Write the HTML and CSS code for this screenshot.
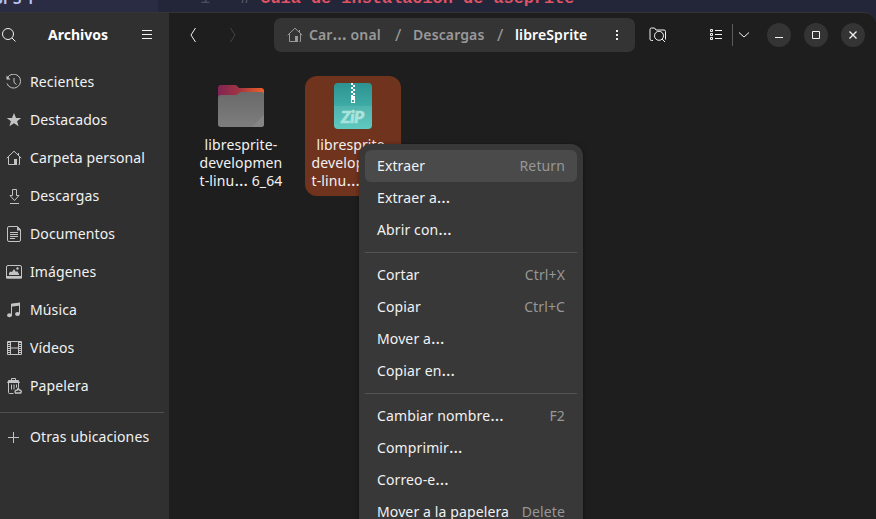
FILE: index.html
```html
<!DOCTYPE html>
<html lang="es">
<head>
<meta charset="utf-8">
<title>Archivos</title>
<link rel="stylesheet" href="styles.css">
</head>
<body>
<div class="editor">
  <div class="editor-side"><span>SPS 1</span></div>
  <div class="editor-code"><span class="line-no">1</span><span class="hash">#</span><span class="heading">Guia de instalacion de aseprite</span></div>
</div>
<div class="window">
  <aside class="sidebar">
    <header class="side-head">
      <svg class="search" width="16" height="16" viewBox="0 0 16 16"><circle cx="7" cy="7" r="5.5"/><path d="M11 11l3.5 3.5"/></svg>
      <h1>Archivos</h1>
      <svg class="burger" width="12" height="12" viewBox="0 0 12 12"><path d="M1 1.5h10M1 5.5h10M1 9.5h10"/></svg>
    </header>
    <nav>
      <a><svg viewBox="0 0 16 16"><path d="M1.200 4.200A7 7 0 1 1 1 9.500M8 4v4.500l2.500 2"/><path class="solid" d="M.5 1.500v4h4z"/></svg><span>Recientes</span></a>
      <a><svg viewBox="0 0 16 16"><path class="solid" d="M8 1l2 5h5.200l-4.100 3.200 1.500 5L8 11.200l-4.600 3 1.500-5L.8 6H6z"/></svg><span>Destacados</span></a>
      <a><svg viewBox="0 0 16 16"><path d="M.7 8.200L8 1.200l7.300 7M2.500 7v7.500h6M12.500 3v2M13.500 7v7.500h-1"/><path class="solid" d="M8 9h3v6H8z"/></svg><span>Carpeta personal</span></a>
      <a><svg viewBox="0 0 16 16"><path d="M6.500 1.500h4v6H13l-4.500 5L4 7.500h2.500zM4 15.500h9"/></svg><span>Descargas</span></a>
      <a><svg viewBox="0 0 16 16"><path d="M3 .5h8.500l3 3V14q0 1.500-1.500 1.500H3q-1.500 0-1.500-1.500V2Q1.500.5 3 .5zM4 6.500h8M4 8.500h8M4 10.500h8M4 12.500h5"/><path class="solid" d="M11 .5l4 4h-4z"/></svg><span>Documentos</span></a>
      <a><svg viewBox="0 0 16 16"><rect x=".5" y="1.500" width="15" height="12.500" rx="1.500"/><path class="solid" d="M0 12h16v2.500H0zM3 11V9l1.500-1.500L6 8l2-3 2 3 1-1 2 3v1z"/><circle class="solid" cx="11.500" cy="4.500" r="1.200"/></svg><span>Imágenes</span></a>
      <a><svg viewBox="0 0 16 16"><path d="M5.500 13V2.500l8-1V12"/><path class="solid" d="M5 1.800l9-1.300v3L5 4.800z"/><ellipse class="solid" cx="3.500" cy="13.300" rx="2.400" ry="2"/><ellipse class="solid" cx="11.500" cy="12" rx="2.400" ry="2"/></svg><span>Música</span></a>
      <a><svg viewBox="0 0 16 16"><path d="M1.500 1.500h14v13h-14zM4.500 1.500v13M12.500 1.500v13M4.500 8h8"/><path class="film" d="M3 2v12M14 2v12"/></svg><span>Vídeos</span></a>
      <a><svg viewBox="0 0 16 16"><path d="M2.500 5v9.500q0 1 1 1h4M5.500 2V.5h4V2M5.500 6.500v5M8 6.500v5M10.500 6.500v3M12.500 5v4"/><path stroke-width="1.400" d="M9.500 15q-1.500-2.500 1.800-3l1-2 1 2q3 .5 1.500 3z"/><path class="solid" d="M1 5l1.500-3h10L14 5z"/></svg><span>Papelera</span></a>
      <hr>
      <a><svg viewBox="0 0 16 16"><path d="M2 8.500h11M7.500 3v11"/></svg><span>Otras ubicaciones</span></a>
    </nav>
  </aside>
  <main>
    <header class="toolbar">
      <svg class="back" width="8" height="16" viewBox="0 0 8 16"><path d="M6.500 1L2 8l4.500 7"/></svg>
      <svg class="forward" width="8" height="16" viewBox="0 0 8 16"><path d="M1.500 1L6 8l-4.500 7"/></svg>
      <div class="path">
        <svg class="home" width="16" height="16" viewBox="0 0 16 16"><path d="M.7 8.200L8 1.200l7.300 7M2.500 7v7.500h6M12.500 3v2M13.500 7v7.500h-1"/><path class="solid" d="M8 9h3v6H8z"/></svg>
        <span class="crumb c1">Car<span class="more">…</span> onal</span><i>/</i><span class="crumb c2">Descargas</span><i>/</i><span class="crumb current">libreSprite</span>
        <svg class="dots" width="4" height="12" viewBox="0 0 4 12"><path class="solid" d="M1 1h2v2H1zM1 5h2v2H1zM1 9h2v2H1z"/></svg>
      </div>
      <svg class="find" width="18" height="16" viewBox="0 0 18 16"><path d="M4 13.500H2.500q-1.500 0-1.500-1.500V2.500Q1 1 2.500 1h3L7 3h8q1.500 0 1.500 1.500v8"/><circle cx="10" cy="8.800" r="4.500"/><path d="M13 12l3 3"/></svg>
      <svg class="list" width="12" height="12" viewBox="0 0 12 12"><path d="M.5.5h2v2h-2zM.5 4.500h2v2h-2zM.5 8.500h2v2h-2zM5 1.500h7M5 5.500h7M5 9.500h7"/></svg>
      <span class="rule"></span>
      <svg class="down" width="12" height="8" viewBox="0 0 12 8"><path d="M1 1.500l5 4.500 5-4.500"/></svg>
      <span class="win"><svg width="10" height="10" viewBox="0 0 10 10"><path d="M1 7.500h8"/></svg></span>
      <span class="win"><svg width="10" height="10" viewBox="0 0 10 10"><path d="M1.500 1.500h7v7h-7z"/></svg></span>
      <span class="win"><svg width="10" height="10" viewBox="0 0 10 10"><path stroke-width="1.300" d="M1.500 1.500l7 7M8.500 1.500l-7 7"/></svg></span>
    </header>
    <section class="files">
      <figure class="file">
        <svg width="48" height="48" viewBox="0 0 48 48">
          <defs>
            <linearGradient id="fb" x1="0" x2="1"><stop offset="0" stop-color="#802454"/><stop offset=".45" stop-color="#a03442"/><stop offset="1" stop-color="#ee6126"/></linearGradient>
            <linearGradient id="ff" x1="0" y1="0" x2="0" y2="1"><stop offset="0" stop-color="#696969"/><stop offset="1" stop-color="#7e7e7e"/></linearGradient>
          </defs>
          <path fill="url(#fb)" d="M4 3h14q2 0 3 2l1 1h22q3 0 3 3v20H1V6q0-3 3-3z"/>
          <path fill="url(#ff)" d="M4 13h14q2 0 3.500-1.500T25 10h19q3 0 3 3v29q0 3-3 3H4q-3 0-3-3V16q0-3 3-3z"/>
          <path fill="#858585" d="M47 33v9q0 3-3 3h-9z"/>
        </svg>
        <figcaption>libresprite-<br>developmen<br>t-linu<span class="more">…</span> 6_64</figcaption>
      </figure>
      <figure class="file selected">
        <svg width="48" height="48" viewBox="0 0 48 48">
          <defs><linearGradient id="zg" x1="0" y1="0" x2="0" y2="1"><stop offset="0" stop-color="#2d9291"/><stop offset="1" stop-color="#50c5ba"/></linearGradient></defs>
          <rect x="5" y="1" width="38" height="46" rx="4" fill="url(#zg)"/>
          <path fill="#fff" fill-opacity=".09" d="M5 24h38v19q0 4-4 4H9q-4 0-4-4z"/>
          <path stroke="#fff" stroke-width="2" stroke-dasharray="2" d="M23 1v14"/>
          <path stroke="#fff" stroke-width="2" stroke-dasharray="2" stroke-dashoffset="2" d="M25 1v14"/>
          <path fill="#fff" fill-rule="evenodd" d="M22 14h4v7h-4zM23 18v2h2v-2z"/>
          <text class="zip" x="12" y="41" textLength="23">ZiP</text>
        </svg>
        <figcaption>libresprite-<br>developmen<br>t-linu<span class="more">…</span> 6_64</figcaption>
      </figure>
    </section>
  </main>
  <div class="menu">
    <div class="item active"><span>Extraer</span><kbd>Return</kbd></div>
    <div class="item"><span>Extraer a<span class="more">…</span></span></div>
    <div class="item"><span>Abrir con<span class="more">…</span></span></div>
    <hr>
    <div class="item"><span>Cortar</span><kbd>Ctrl+X</kbd></div>
    <div class="item"><span>Copiar</span><kbd>Ctrl+C</kbd></div>
    <div class="item"><span>Mover a<span class="more">…</span></span></div>
    <div class="item"><span>Copiar en<span class="more">…</span></span></div>
    <hr>
    <div class="item"><span>Cambiar nombre<span class="more">…</span></span><kbd>F2</kbd></div>
    <div class="item"><span>Comprimir<span class="more">…</span></span></div>
    <div class="item"><span>Correo-e<span class="more">…</span></span></div>
    <div class="item"><span>Mover a la papelera</span><kbd>Delete</kbd></div>
  </div>
</div>
</body>
</html>
```
FILE: styles.css
```css
* { box-sizing: border-box; }
body {
  margin: 0;
  width: 876px;
  height: 519px;
  overflow: hidden;
  background: #232539;
  color: #f2f2f2;
  font: 14px/18px "Noto Sans", "Open Sans", sans-serif;
  letter-spacing: .12px;
  display: flex;
  flex-direction: column;
}
svg { flex: none; fill: none; stroke: currentColor; display: block; }
svg .solid { fill: currentColor; stroke: none; }
figure svg { stroke: none; }
.more { font-size: 17px; line-height: 1px; }

.editor { display: flex; height: 12px; flex: none; overflow: hidden; font: 16.9px/20px "Liberation Mono", monospace; letter-spacing: 0; background: #232539; }
.editor-side { width: 158px; background: #2a2c43; color: #b8c4ee; font: 600 16px/20px "Noto Sans", sans-serif; }
.editor-side span { display: block; margin: -12px 0 0 -6px; }
.editor-code { display: flex; margin-top: -11px; }
.line-no { margin-left: 42px; color: #4b4e62; }
.hash { margin-left: 30px; color: #666979; }
.heading { margin-left: 10px; color: #df5365; font-weight: bold; white-space: pre; }

.window { position: relative; flex: 1; display: flex; min-height: 0; background: #1e1e1e; border-top: 1px solid #343434; border-radius: 0 12px 0 0; }
.sidebar { width: 169px; background: #303030; flex: none; }
.side-head { height: 44px; display: flex; align-items: center; padding-left: 1px; }
.side-head h1 { margin: 0 0 0 31px; width: 60px; font-size: 14px; line-height: 18px; font-weight: 700; letter-spacing: 0; white-space: nowrap; color: #fff; }
.burger { margin-left: 33px; }
.sidebar nav { display: flex; flex-direction: column; padding-top: 6px; }
.sidebar a { height: 38px; display: flex; align-items: center; gap: 8px; padding-left: 6px; white-space: nowrap; }
.sidebar a svg { width: 16px; height: 16px; color: #c4c4c4; }
.film { stroke-dasharray: 1 1; stroke-width: 2; }
.sidebar hr { width: 164px; height: 1px; border: 0; margin: 7px 0 5px; background: #505050; }

main { flex: 1; min-width: 0; }
.toolbar { height: 44px; display: flex; align-items: center; }
.back { margin-left: 20px; }
.forward { margin-left: 32px; color: #444; }
.path { flex: none; margin-left: 37px; width: 361px; height: 34px; border-radius: 7px; background: #343434; display: flex; align-items: center; padding-left: 13px; font-weight: 600; color: #999; white-space: nowrap; }
.path i { flex: none; width: 6px; margin: 0 12px; font-weight: 400; font-style: normal; font-size: 17px; }
.crumb { flex: none; }
.crumb.c1 { margin-left: 6px; width: 74px; }
.crumb.c2 { width: 72px; }
.crumb.current { color: #fff; width: 73px; }
.dots { margin-left: 27px; color: #eee; }
.find { flex: none; margin-left: 14px; }
.list { margin-left: 43px; }
.rule { flex: none; margin-left: 10px; width: 1px; height: 22px; background: #5b5b5b; }
.down { margin: 0 17px 0 5px; }
.win { width: 24px; height: 24px; margin-right: 13px; border-radius: 50%; background: #343434; display: grid; place-items: center; flex: none; }

.files { display: flex; gap: 16px; padding: 19px 0 0 24px; }
.file { margin: 0; width: 96px; height: 120px; border-radius: 12px; padding: 6px 0; display: flex; flex-direction: column; align-items: center; text-align: center; white-space: nowrap; }
.file figcaption { margin-top: 6px; }
.selected { background: #70331e; }
.zip { font: italic 900 17px "Lato", sans-serif; fill: #a9e3dc; stroke: #a9e3dc; stroke-width: .7; letter-spacing: 0; }

.menu { position: absolute; left: 359px; top: 131px; width: 224px; height: 400px; padding: 6px; background: #383838; border-radius: 12px; box-shadow: 0 1px 5px rgba(0, 0, 0, .4); }
.item { height: 32px; display: flex; align-items: center; justify-content: space-between; padding: 0 12px; border-radius: 6px; white-space: nowrap; }
.item.active { background: #4a4a4a; }
.item kbd { font: inherit; color: #979797; }
.menu hr { height: 1px; margin: 6px 0; border: 0; background: #535353; }
```
